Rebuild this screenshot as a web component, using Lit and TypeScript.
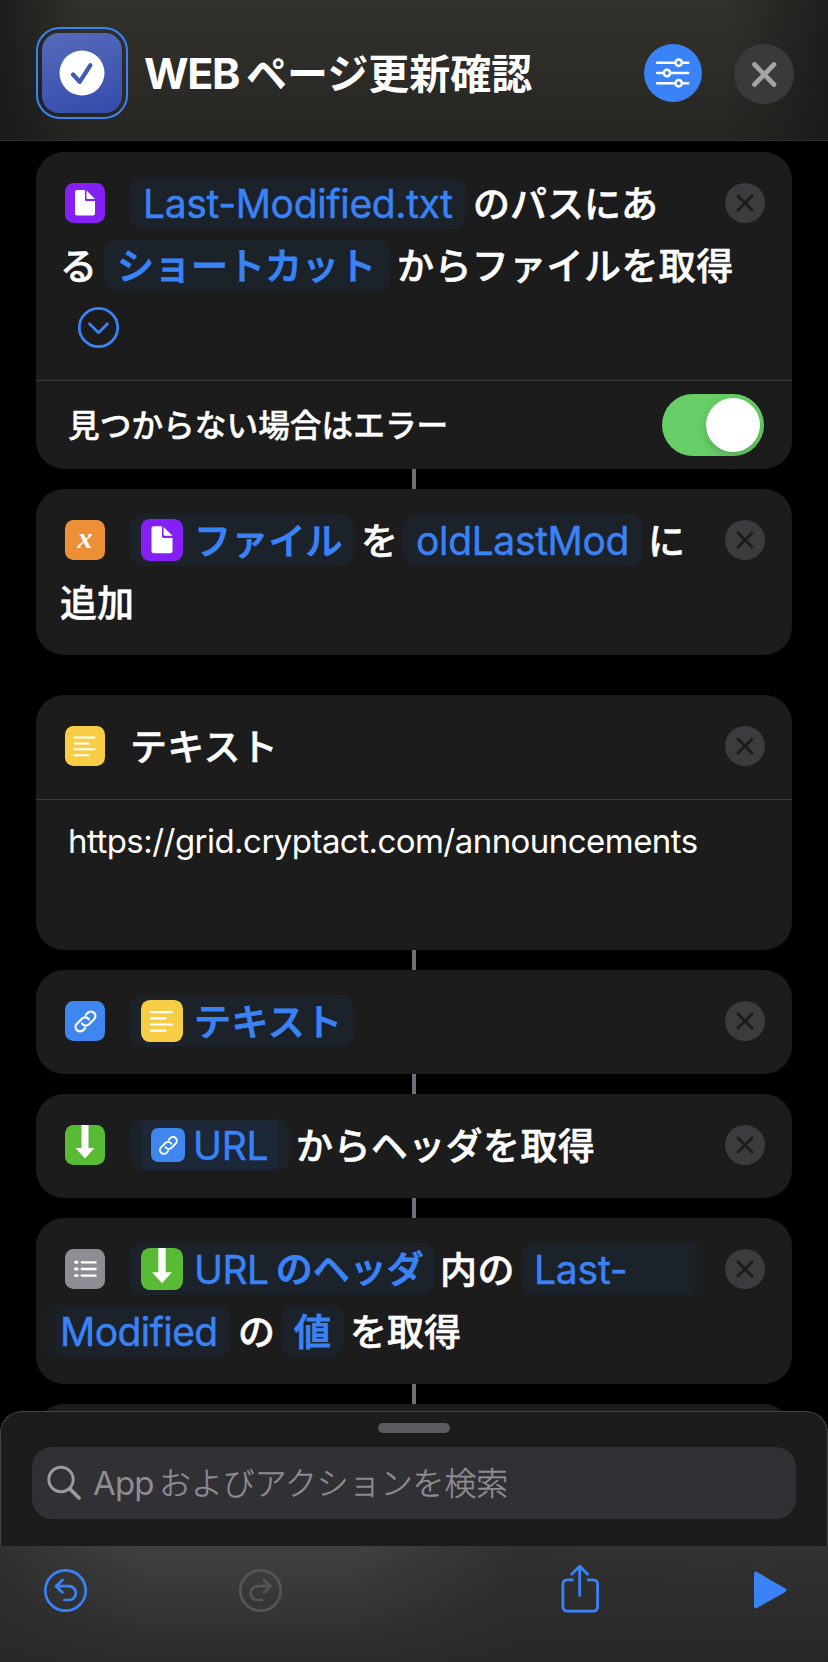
import { LitElement, html, css, svg } from "lit";
import { customElement, property } from "lit/decorators.js";

const glyphs: Record<string, unknown> = {
  file: svg`<path fill="#fff" d="M12 7h8v9.500q0 1.500 1.500 1.500h8.500v12.500q0 2-2 2h-16q-2 0-2-2v-21.500q0-2 2-2z"/><path fill="#fff" d="M21.500 7.500l8.500 8.500h-7.500q-1 0-1-1z"/>`,
  text: svg`<path stroke="#fff" stroke-width="2" stroke-linecap="round" d="M9.500 11.500h20M9.500 17.500h14M9.500 23.300h20M9.500 29.200h14"/>`,
  link: svg`<g transform="rotate(-45 20.500 20.500)" fill="none" stroke="#fff" stroke-width="2.200" stroke-linecap="round"><path d="M15.500 25h-2.700a4.500 4.500 0 0 1 0-9h7.200a4.500 4.500 0 0 1 4.400 5.500"/><path d="M25.500 16h2.700a4.500 4.500 0 0 1 0 9h-7.200a4.500 4.500 0 0 1-4.400-5.500"/></g>`,
  down: svg`<path fill="#fff" d="M16.500 0h7v23h6l-9.500 10.500l-9.500-10.500h6z"/>`,
  list: svg`<path stroke="#fff" stroke-width="2.300" stroke-linecap="round" d="M16.700 13.300h14M16.700 20h14M16.700 26.600h14"/><path stroke="#fff" stroke-width="2.900" stroke-linecap="round" d="M10.500 13.300h1.600M10.500 20h1.600M10.500 26.600h1.600"/>`,
  variable: svg`<text x="20" y="27.500" text-anchor="middle" fill="#fff" font-family="Liberation Serif, serif" font-style="italic" font-weight="700" font-size="30">x</text>`,
};
const tints: Record<string, string> = {
  file: "#8520f5", text: "#f7cd46", link: "#4086ef", down: "#58ba35", list: "#8e8d93", variable: "#ed8f37",
};

@customElement("action-icon")
class ActionIcon extends LitElement {
  @property() name = "file";
  @property({ type: Number }) size = 40;
  static styles = css`:host{display:block;flex:none}svg{display:block}`;
  render() {
    return html`<svg width=${this.size} height=${this.size} viewBox="0 0 40 40"><rect width="40" height="40" rx="8.500" fill=${tints[this.name]}/>${glyphs[this.name]}</svg>`;
  }
}

type Part = { t?: string; k: string; at: number; w: number; pad?: number; ls?: number; icon?: string; size?: number; t2?: string; gap?: number };
type Line = Part[];

@customElement("action-card")
class ActionCard extends LitElement {
  @property() icon = "file";
  @property({ attribute: false }) lines: Line[] = [];
  static styles = css`
    :host{display:block;background:#1c1c1c;border-radius:28px;overflow:hidden}
    .head{padding:25px 27px 27px 24px;display:flex;flex-direction:column;gap:10px}
    .row{display:flex;height:52px;align-items:center;white-space:nowrap}
    .lead{margin-left:5px}
    .close{margin-left:auto;display:block;flex:none}
    .part{flex:none;box-sizing:border-box;height:52px;line-height:52px;font-size:39px;color:#fff;display:flex;align-items:center;
      font-family:Inter,"Noto Sans CJK JP",sans-serif}
    .part span{-webkit-text-stroke:.45px #3a83f7;padding-top:1px}
    .part.word span{-webkit-text-stroke:.5px #fff;padding-top:4px}
    .part.jp span{-webkit-text-stroke:.9px #3a83f7;padding-top:3px}
    .word{font-size:37px;font-weight:500}
    .chip{background:#1b222a;color:#3a83f7;border-radius:14px}
    .jp{font-size:37px;font-weight:500}
    .part .tail{font-size:37px;font-weight:500;letter-spacing:0;margin-left:7px;-webkit-text-stroke:.9px #3a83f7}
    .nested{background:linear-gradient(#1c2737,#1c2737) 13px 2px/134px 48px no-repeat #1b222a}
    .fade-r{border-radius:14px 0 0 14px;background:linear-gradient(90deg,#1b222a 92%,#1c1c1c)}
    .fade-l{border-radius:0 14px 14px 0;background:linear-gradient(270deg,#1b222a 90%,#1c1c1c)}
    .more{display:block}
  `;
  private part(p: Part, prev: number) {
    const style = `margin-left:${p.at - prev}px;width:${p.w}px;padding-left:${p.pad ?? 0}px;letter-spacing:${p.ls ?? 0}px`;
    if (p.k === "more")
      return html`<div class="part" style=${style}><svg class="more" width="42" height="42" viewBox="0 0 42 42" fill="none" stroke="#3a83f7" stroke-width="2.700" stroke-linecap="round" stroke-linejoin="round"><circle cx="21.500" cy="21.500" r="19.200"/><path d="M12.500 17.700l9 9l9-9"/></svg></div>`;
    return html`<div class="part ${p.k}" style=${style}>${p.icon
      ? html`<action-icon name=${p.icon} .size=${p.size ?? 42} style="margin-right:${p.gap ?? 11}px"></action-icon>` : ""}<span>${p.t}</span>${p.t2 ? html`<span class="tail">${p.t2}</span>` : ""}</div>`;
  }
  render() {
    return html`<div class="head">${this.lines.map((line, i) => {
      let x = i === 0 ? 105 : 60;
      return html`<div class="row">${i === 0 ? html`<action-icon class="lead" name=${this.icon}></action-icon>` : ""}${line.map((p) => {
        const out = this.part(p, x);
        x = p.at + p.w;
        return out;
      })}${i === 0 ? html`<svg class="close" width="40" height="40" viewBox="0 0 40 40"><circle cx="20" cy="20" r="20" fill="#3c3c3e"/><path d="M13 13l14 14M27 13l-14 14" stroke="#1c1c1c" stroke-width="2.900" stroke-linecap="round"/></svg>` : ""}</div>`;
    })}</div><slot></slot>`;
  }
}

@customElement("app-root")
class AppRoot extends LitElement {
  static styles = css`
    :host{display:flex;flex-direction:column;width:828px;height:1662px;background:#000;overflow:hidden;color:#fff;font-family:Inter,"Noto Sans CJK JP",sans-serif}
    .header{flex:none;box-sizing:border-box;height:141px;border-bottom:1px solid #2f302f;display:flex;align-items:center;padding:6px 34px 0 36px;
      background:linear-gradient(90deg,rgba(22,23,23,.75),transparent 10%,transparent 88%,rgba(24,24,24,.75)),linear-gradient(#32312b,#2c2b27 55%,#252521)}
    .badge{box-sizing:border-box;width:92px;height:92px;border:2px solid #3a83f7;border-radius:24px;padding:4px;flex:none}
    .tile{width:80px;height:80px;border-radius:17px;background:linear-gradient(165deg,#566bbb,#344bab);display:flex;align-items:center;justify-content:center}
    .title{margin:1px 0 0 16px;width:500px;display:flex;align-items:baseline;white-space:nowrap;line-height:60px}
    .web{font-size:43px;width:102px;letter-spacing:-1.400px;font-weight:700}
    .name{font-size:41px;font-weight:700}
    .tune{flex:none;margin-top:-1px}
    .x{flex:none;margin:2px 0 0 32px}
    .list{flex:1;min-height:0;overflow:hidden;padding:11px 36px 0;display:flex;flex-direction:column}
    action-card{flex:none}
    .wire{flex:none;align-self:center;width:4px;height:20px;background:#707077}
    .gap{flex:none;height:40px}
    .option{border-top:1px solid #3d3d3f;height:88px;display:flex;align-items:center;justify-content:space-between;padding:0 28px 0 32px;font-size:31.700px;font-weight:500;-webkit-text-stroke:.4px #fff}
    .option span{margin-bottom:5px}
    .toggle{box-sizing:border-box;width:102px;height:62px;border-radius:31px;background:#67ce67;padding:4px;display:flex;justify-content:flex-end}
    .knob{width:54px;height:54px;border-radius:50%;background:#fff;box-shadow:0 4px 10px rgba(0,0,0,.18)}
    .body{border-top:1px solid #3d3d3f;height:151px;box-sizing:border-box;padding:19px 32px;line-height:44px;font-size:33px;letter-spacing:-.54px}
    .peek{flex:none;height:60px;border-radius:28px;background:#1c1c1c}
    .sheet{flex:none;box-sizing:border-box;height:135px;border:1px solid #434345;border-bottom:0;border-radius:22px 22px 0 0;background:#1c1c1c;display:flex;flex-direction:column;align-items:center;padding-top:11px}
    .handle{width:72px;height:10px;border-radius:5px;background:#5a5a5f}
    .search{margin-top:14px;box-sizing:border-box;width:764px;height:72px;border-radius:20px;background:#313035;display:flex;align-items:center;padding-left:15px;color:#8d8d93;white-space:nowrap;line-height:44px}
    .q{margin-left:12px;display:flex;align-items:baseline;font-size:33px}
    .app{width:66px;letter-spacing:-.8px}
    .jp{font-size:31.900px;font-weight:300;-webkit-text-stroke:.45px #8d8d93}
    .bar{flex:none;height:116px;box-sizing:border-box;display:flex;align-items:flex-start;padding:17px 38px 0 43px;
      background:linear-gradient(90deg,rgba(38,38,38,.6),transparent 18%,transparent 42%,rgba(38,38,38,.6) 62%,rgba(36,36,36,.5)),linear-gradient(#414142,#2b2b2d)}
    .ico{flex:none;display:block}
    .redo{margin-left:149px}.share{margin-left:275px}.play{margin-left:152px}
  `;
  render() {
    return html`
      <div class="header">
        <div class="badge"><div class="tile"><svg width="46" height="46" viewBox="0 0 46 46"><circle cx="23" cy="23" r="22.500" fill="#fff"/><path d="M14 24.500l6.700 7.300l10.600-16.500" fill="none" stroke="#435ab3" stroke-width="4.300" stroke-linecap="round" stroke-linejoin="round"/></svg></div></div>
        <div class="title"><span class="web">WEB</span><span class="name">ページ更新確認</span></div>
        <svg class="tune" width="58" height="58" viewBox="0 0 58 58"><circle cx="29" cy="29" r="29" fill="#3a83f7"/><g stroke="#fff" stroke-width="2.500" stroke-linecap="round"><path d="M13.200 18.700h31M13.200 29h31M13.200 39.200h31"/><g fill="#3a83f7"><circle cx="34.700" cy="18.700" r="3.200"/><circle cx="23" cy="29" r="3.200"/><circle cx="34.700" cy="39.200" r="3.200"/></g></g></svg>
        <svg class="x" width="60" height="60" viewBox="0 0 60 60"><circle cx="30" cy="30" r="30" fill="#3a3a3a"/><path d="M20.500 20.500l19.500 20M40 20.500l-19.500 20" stroke="#a3a3a8" stroke-width="4.700" stroke-linecap="round"/></svg>
      </div>
      <div class="list">
        <action-card icon="file" .lines=${[
          [{ k: "chip", t: "Last-Modified.txt", at: 130, w: 336, pad: 13, ls: -0.35 }, { k: "word", t: "のパスにあ", at: 473, w: 190 }],
          [{ k: "word", t: "る", at: 60, w: 40 }, { k: "chip jp", t: "ショートカット", at: 104, w: 287, pad: 13 }, { k: "word", t: "からファイルを取得", at: 397, w: 340, ls: 0.4 }],
          [{ k: "more", at: 77, w: 42 }],
        ]}><div class="option"><span>見つからない場合はエラー</span><div class="toggle"><div class="knob"></div></div></div></action-card>
        <div class="wire"></div>
        <action-card icon="variable" .lines=${[
          [{ k: "chip jp", icon: "file", t: "ファイル", at: 130, w: 224, pad: 11, ls: 0.2 }, { k: "word", t: "を", at: 361, w: 38 }, { k: "chip", t: "oldLastMod", at: 403, w: 240, pad: 13, ls: -0.35 }, { k: "word", t: "に", at: 648, w: 38 }],
          [{ k: "word", t: "追加", at: 60, w: 80 }],
        ]}></action-card>
        <div class="gap"></div>
        <action-card icon="text" .lines=${[[{ k: "word", t: "テキスト", at: 130, w: 150, ls: 0.3 }]]}><div class="body">https://grid.cryptact.com/announcements</div></action-card>
        <div class="wire"></div>
        <action-card icon="link" .lines=${[[{ k: "chip jp", icon: "text", t: "テキスト", at: 130, w: 224, pad: 11, ls: 0.4 }]]}></action-card>
        <div class="wire"></div>
        <action-card icon="down" .lines=${[[{ k: "chip nested", icon: "link", size: 34, gap: 8, t: "URL", at: 130, w: 160, pad: 21, ls: -0.3 }, { k: "word", t: "からヘッダを取得", at: 296, w: 304, ls: 0.4 }]]}></action-card>
        <div class="wire"></div>
        <action-card icon="list" .lines=${[
          [{ k: "chip", icon: "down", gap: 11, t: "URL", t2: "のヘッダ", at: 129, w: 306, pad: 12, ls: -0.5 }, { k: "word", t: "内の", at: 440, w: 76, ls: 0.6 }, { k: "chip fade-r", t: "Last-", at: 522, w: 182, pad: 12, ls: -0.2 }],
          [{ k: "chip fade-l", t: "Modified", at: 42, w: 189, pad: 18, ls: -0.6 }, { k: "word", t: "の", at: 238, w: 38 }, { k: "chip jp", t: "値", at: 281, w: 63, pad: 13 }, { k: "word", t: "を取得", at: 350, w: 120 }],
        ]}></action-card>
        <div class="wire"></div>
        <div class="peek"></div>
      </div>
      <div class="sheet"><div class="handle"></div>
        <div class="search"><svg width="34" height="36" viewBox="0 0 34 36" fill="none" stroke="#9a9aa1" stroke-linecap="round"><circle cx="14" cy="14.500" r="12.200" stroke-width="2.900"/><path d="M23 24l9 9" stroke-width="3.700"/></svg><div class="q"><span class="app">App</span><span class="jp">およびアクションを検索</span></div></div>
      </div>
      <div class="bar">
        <svg class="ico undo" width="45" height="54" viewBox="0 0 45 54" fill="none" stroke="#3a83f7" stroke-width="2.700" stroke-linecap="round" stroke-linejoin="round"><circle cx="22.500" cy="27.500" r="20.200"/><path d="M19.500 17l-6.500 6.200l6.500 6.200M13 23.200h13a6.900 6.900 0 0 1 0 13.800h-4.500"/></svg>
        <svg class="ico redo" width="45" height="54" viewBox="0 0 45 54" fill="none" stroke="#555557" stroke-width="2.700" stroke-linecap="round" stroke-linejoin="round"><circle cx="23.500" cy="27.500" r="20.200"/><path d="M27 17l6.500 6.200l-6.500 6.200M33.500 23.200h-13a6.900 6.900 0 0 0 0 13.800h4.500"/></svg>
        <svg class="ico share" width="44" height="54" viewBox="0 0 44 54" fill="none" stroke="#3a83f7" stroke-width="2.800" stroke-linecap="round" stroke-linejoin="round"><path d="M16.500 16.800h-6q-4.600 0-4.600 4.600v22.100q0 4.600 4.600 4.600h25.500q4.600 0 4.600-4.600v-22.100q0-4.600-4.600-4.600h-6" stroke-linecap="butt"/><path d="M22.700 32.500v-28.500M14.700 11.200l8-8l8 8"/></svg>
        <svg class="ico play" width="36" height="54" viewBox="0 0 36 54"><path d="M1 11q0-3.500 3-2l27.500 16q3.500 2.200 0 4.400l-27.500 15.500q-3 1.500-3-2z" fill="#3a83f7"/></svg>
      </div>`;
  }
}
